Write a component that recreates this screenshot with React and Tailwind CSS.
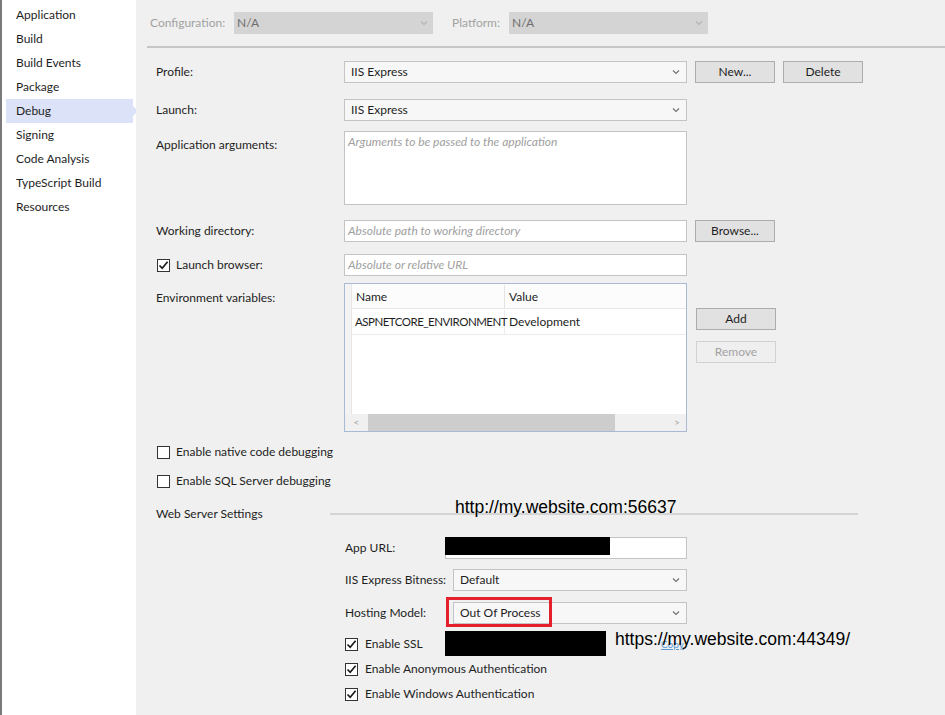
import React from "react";

const FONT = { fontFamily: "Lato, 'Open Sans', sans-serif" };

const navItems = [
    "Application",
    "Build",
    "Build Events",
    "Package",
    "Debug",
    "Signing",
    "Code Analysis",
    "TypeScript Build",
    "Resources",
];

function Chevron({ className = "" }) {
    return (
        <svg width="8" height="6" viewBox="0 0 8 6" className={className}>
            <path d="M1 1.5 L4 4.5 L7 1.5" fill="none" stroke="currentColor" strokeWidth="1.1" />
        </svg>
    );
}

function Select({ value, className = "" }) {
    return (
        <div
            className={`h-[22px] flex items-center justify-between bg-[#f7f7f7] border border-[#c4c4c4] pl-[6px] pr-[6px] text-[#1e1e1e] ${className}`}
        >
            <span>{value}</span>
            <Chevron className="text-[#707070]" />
        </div>
    );
}

function Button({ children, disabled }) {
    return (
        <div
            className={`w-[80px] h-[22px] flex items-center justify-center border ${
                disabled
                    ? "bg-[#efefef] border-[#d2d2d2] text-[#a3a3a3]"
                    : "bg-[#e1e1e1] border-[#adadad] text-[#1e1e1e]"
            }`}
        >
            {children}
        </div>
    );
}

function Checkbox({ checked }) {
    return (
        <div className="w-[13px] h-[13px] bg-white border border-[#333] flex items-center justify-center shrink-0">
            {checked && (
                <svg width="11" height="11" viewBox="0 0 11 11">
                    <path d="M1.5 5.5 L4.2 8.3 L9.6 1.8" fill="none" stroke="#1a1a1a" strokeWidth="1.7" />
                </svg>
            )}
        </div>
    );
}

function Input({ placeholder, className = "" }) {
    return (
        <div className={`h-[22px] bg-white border border-[#c4c4c4] flex items-center pl-[3px] italic text-[#a0a0a0] ${className}`}>
            {placeholder}
        </div>
    );
}

export default function App() {
    return (
        <div className="w-[945px] h-[715px] flex text-[12px] text-[#1e1e1e] overflow-hidden" style={FONT}>
            {/* sidebar */}
            <div className="w-[136px] h-full bg-white border-l-2 border-[#7a7a7a] pt-[3px] shrink-0">
                {navItems.map((item) => (
                    <div key={item} className="relative h-[24px] flex items-center">
                        {item === "Debug" && (
                            <>
                                <div className="absolute left-[4px] right-[3px] top-[0px] bottom-[0px] bg-[#dce2f7]" />
                                <div className="absolute right-[-2px] top-[7px] w-0 h-0 border-y-[5px] border-y-transparent border-l-[5px] border-l-[#dce2f7]" />
                            </>
                        )}
                        <span className="relative pl-[14px]">{item}</span>
                    </div>
                ))}
            </div>

            {/* main */}
            <div className="flex-1 bg-[#f0f0f0] relative">
                {/* configuration bar */}
                <div className="h-[48px] ml-[11px] border-b-2 border-[#c6c6c6] flex items-center">
                    <span className="text-[#a2a2a2] ml-[3px] w-[84px]">Configuration:</span>
                    <div className="w-[199px] h-[22px] bg-[#d4d4d4] flex items-center justify-between px-[3px] text-[#6e6e6e]">
                        <span>N/A</span>
                        <Chevron className="text-[#b5b5b5] mr-[2px]" />
                    </div>
                    <span className="text-[#a2a2a2] ml-[19px] w-[57px]">Platform:</span>
                    <div className="w-[199px] h-[22px] bg-[#d4d4d4] flex items-center justify-between px-[3px] text-[#6e6e6e]">
                        <span>N/A</span>
                        <Chevron className="text-[#b5b5b5] mr-[2px]" />
                    </div>
                </div>

                <div className="pl-[20px]">
                    {/* Profile */}
                    <div className="flex items-center mt-[13px]">
                        <span className="w-[188px]">Profile:</span>
                        <Select value="IIS Express" className="w-[343px]" />
                        <div className="ml-[8px]">
                            <Button>New...</Button>
                        </div>
                        <div className="ml-[8px]">
                            <Button>Delete</Button>
                        </div>
                    </div>

                    {/* Launch */}
                    <div className="flex items-center mt-[16px]">
                        <span className="w-[188px]">Launch:</span>
                        <Select value="IIS Express" className="w-[343px]" />
                    </div>

                    {/* Application arguments */}
                    <div className="flex items-start mt-[10px]">
                        <span className="w-[188px] mt-[5px]">Application arguments:</span>
                        <div className="w-[343px] h-[74px] bg-white border border-[#c4c4c4] pl-[3px] pt-[1px] italic text-[#a0a0a0]">
                            Arguments to be passed to the application
                        </div>
                    </div>

                    {/* Working directory */}
                    <div className="flex items-center mt-[15px]">
                        <span className="w-[188px]">Working directory:</span>
                        <Input placeholder="Absolute path to working directory" className="w-[343px]" />
                        <div className="ml-[8px]">
                            <Button>Browse...</Button>
                        </div>
                    </div>

                    {/* Launch browser */}
                    <div className="flex items-center mt-[12px]">
                        <div className="w-[188px] flex items-center">
                            <div className="ml-[1px]">
                                <Checkbox checked />
                            </div>
                            <span className="ml-[6px]">Launch browser:</span>
                        </div>
                        <Input placeholder="Absolute or relative URL" className="w-[343px]" />
                    </div>

                    {/* Environment variables */}
                    <div className="flex items-start mt-[7px]">
                        <span className="w-[188px] mt-[6px]">Environment variables:</span>
                        <div className="w-[343px] h-[149px] bg-white border border-[#a9bad4] flex flex-col">
                            <div className="flex-1 flex">
                                <div className="w-[7px] bg-[#f3f3f3] border-r border-[#e6e6e6]" />
                                <div className="flex-1 flex flex-col">
                                    <div className="h-[25px] flex border-b border-[#e8e8e8] bg-[#fcfcfc] pt-[1px]">
                                        <div className="w-[153px] pl-[4px] flex items-center border-r border-[#e3e3e3]">Name</div>
                                        <div className="flex-1 pl-[4px] flex items-center">Value</div>
                                    </div>
                                    <div className="h-[26px] flex border-b border-[#ececec] pt-[1px]">
                                        <div className="w-[153px] pl-[3px] flex items-center border-r border-[#ececec] whitespace-nowrap text-[11.5px] tracking-[-0.5px]">
                                            ASPNETCORE_ENVIRONMENT
                                        </div>
                                        <div className="flex-1 pl-[4px] flex items-center">Development</div>
                                    </div>
                                </div>
                            </div>
                            <div className="h-[17px] bg-[#f0f0f0] flex items-center">
                                <span className="w-[23px] flex justify-center text-[#a6a6a6] text-[10px]">&lt;</span>
                                <div className="w-[247px] h-[17px] bg-[#cdcdcd]" />
                                <div className="flex-1" />
                                <span className="w-[18px] flex justify-center text-[#a6a6a6] text-[10px]">&gt;</span>
                            </div>
                        </div>
                        <div className="ml-[9px] mt-[25px] flex flex-col gap-[11px]">
                            <Button>Add</Button>
                            <Button disabled>Remove</Button>
                        </div>
                    </div>

                    {/* debugging options */}
                    <div className="flex items-center mt-[11px] ml-[1px]">
                        <Checkbox />
                        <span className="ml-[6px]">Enable native code debugging</span>
                    </div>
                    <div className="flex items-center mt-[11px] ml-[1px]">
                        <Checkbox />
                        <span className="ml-[6px]">Enable SQL Server debugging</span>
                    </div>

                    {/* Web server settings */}
                    <div className="relative flex items-center mt-[17px] h-[14px]">
                        <span className="w-[174px]">Web Server Settings</span>
                        <div className="w-[528px] h-[2px] bg-[#d4d4d4] mt-[-1px]" />
                        <span
                            className="absolute left-[299px] top-[-13px] text-[17.5px] text-black"
                            style={{ fontFamily: "'Liberation Sans', Arial, sans-serif" }}
                        >
                            http://my.website.com:56637
                        </span>
                    </div>

                    <div className="ml-[189px]">
                        {/* App URL */}
                        <div className="relative flex items-center mt-[16px]">
                            <span className="w-[100px]">App URL:</span>
                            <div className="w-[242px] h-[22px] bg-white border border-[#c4c4c4]" />
                            <div className="absolute left-[100px] top-0 w-[165px] h-[18px] bg-black" />
                        </div>

                        {/* Bitness */}
                        <div className="flex items-center mt-[10px]">
                            <span className="w-[108px]">IIS Express Bitness:</span>
                            <Select value="Default" className="w-[234px]" />
                        </div>

                        {/* Hosting model */}
                        <div className="relative flex items-center mt-[11px]">
                            <span className="w-[108px]">Hosting Model:</span>
                            <Select value="Out Of Process" className="w-[234px]" />
                            <div className="absolute left-[101px] top-[-5px] w-[106px] h-[30px] border-[3px] border-[#e3202b]" />
                        </div>

                        {/* SSL */}
                        <div className="relative flex items-center mt-[13px] h-[14px]">
                            <Checkbox checked />
                            <span className="ml-[7px]">Enable SSL</span>
                            <div className="absolute left-[100px] top-[-6px] w-[161px] h-[25px] bg-black" />
                            <span className="absolute left-[316px] top-[0px] text-[10px] text-[#5b9bd5] underline">Copy</span>
                            <span
                                className="absolute left-[270px] top-[-11px] text-[17.5px] text-black whitespace-nowrap"
                                style={{ fontFamily: "'Liberation Sans', Arial, sans-serif" }}
                            >
                                https://my.website.com:44349/
                            </span>
                        </div>
                        <div className="flex items-center mt-[9px]">
                            <Checkbox checked />
                            <span className="ml-[7px]">Enable Anonymous Authentication</span>
                        </div>
                        <div className="flex items-center mt-[7px]">
                            <Checkbox checked />
                            <span className="ml-[7px]">Enable Windows Authentication</span>
                        </div>
                    </div>
                </div>
            </div>
        </div>
    );
}
